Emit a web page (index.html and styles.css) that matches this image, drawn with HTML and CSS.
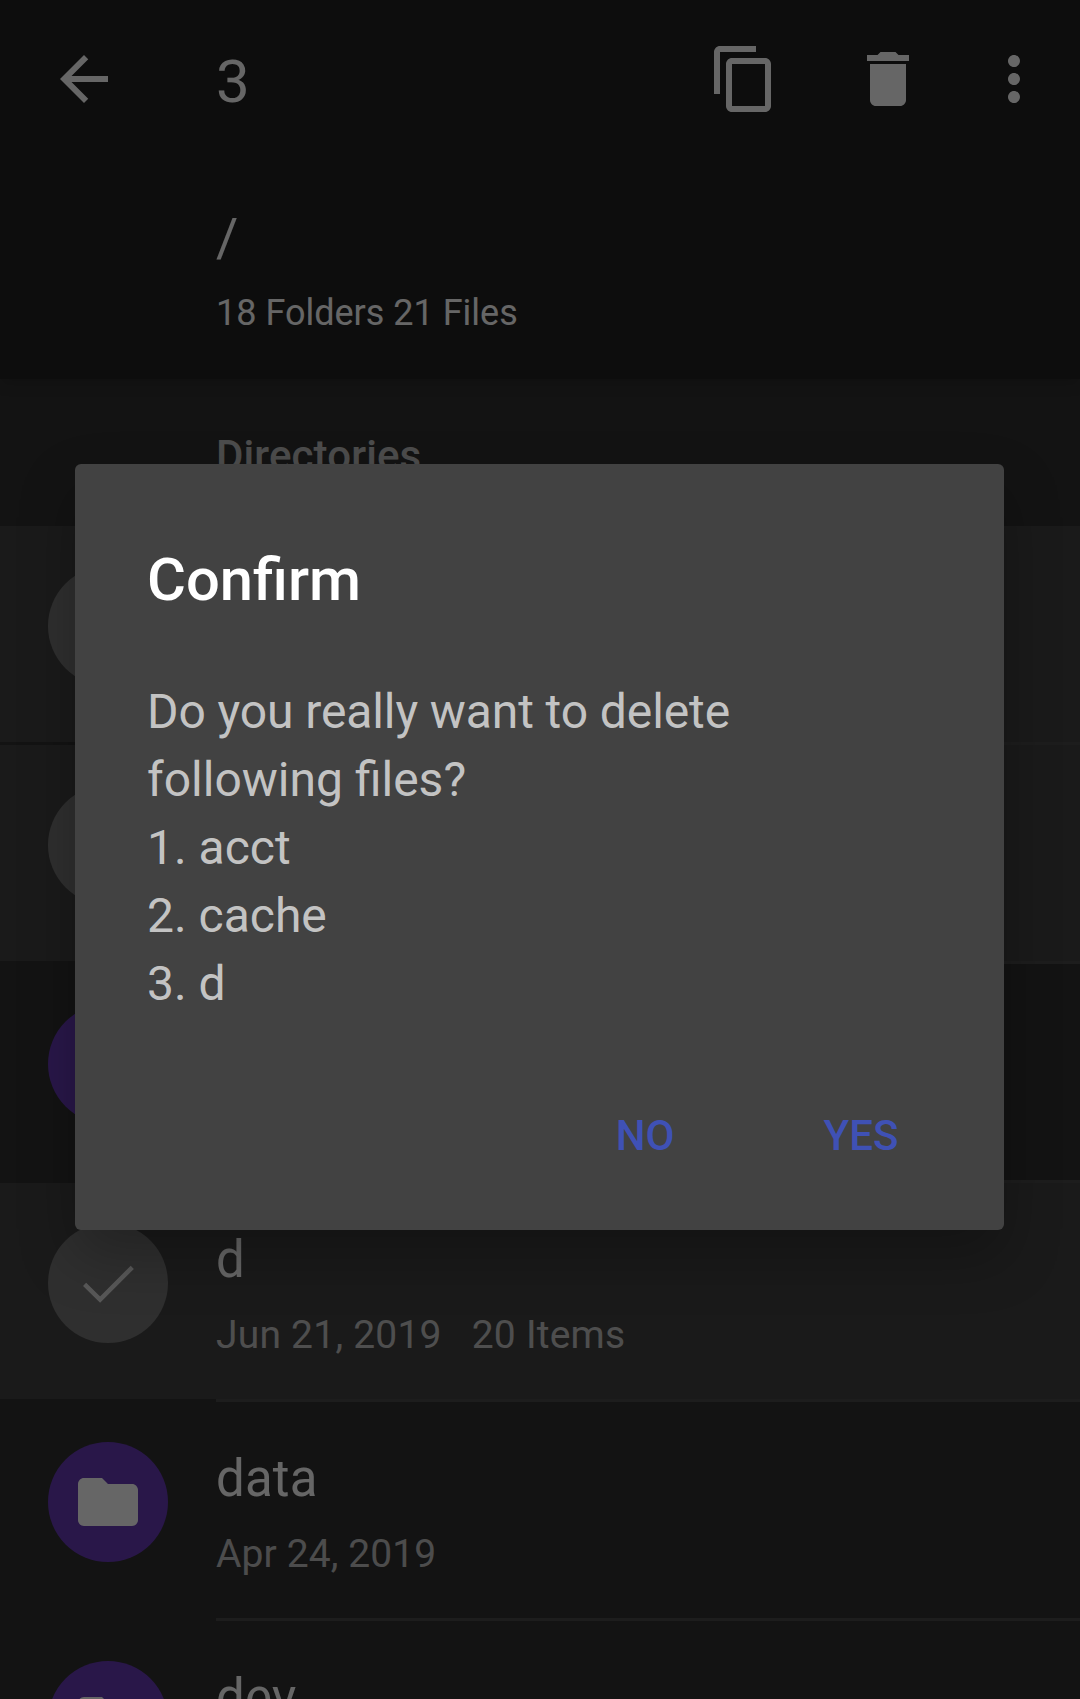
FILE: index.html
```html
<!DOCTYPE html>
<html lang="en">
<head>
<meta charset="utf-8">
<title>Files</title>
<link rel="stylesheet" href="styles.css">
</head>
<body>
<div class="screen">
  <header class="app-bar">
    <div class="toolbar">
      <svg class="icon" viewBox="0 0 24 24"><path d="M20 11H7.83l5.59-5.59L12 4l-8 8 8 8 1.41-1.41L7.83 13H20v-2z"/></svg>
      <span class="count">3</span>
      <svg class="icon" viewBox="0 0 24 24"><path d="M16 1H4c-1.1 0-2 .9-2 2v14h2V3h12V1zm3 4H8c-1.1 0-2 .9-2 2v14c0 1.1.9 2 2 2h11c1.1 0 2-.9 2-2V7c0-1.1-.9-2-2-2zm0 16H8V7h11v14z"/></svg>
      <svg class="icon delete" viewBox="0 0 24 24"><path d="M6 19c0 1.1.9 2 2 2h8c1.1 0 2-.9 2-2V7H6v12zM19 4h-3.5l-1-1h-5l-1 1H5v2h14V4z"/></svg>
      <svg class="icon more" viewBox="0 0 24 24"><path d="M12 8c1.1 0 2-.9 2-2s-.9-2-2-2-2 .9-2 2 .9 2 2 2zm0 2c-1.1 0-2 .9-2 2s.9 2 2 2 2-.9 2-2-.9-2-2-2zm0 6c-1.1 0-2 .9-2 2s.9 2 2 2 2-.9 2-2-.9-2-2-2z"/></svg>
    </div>
    <div class="path">/</div>
    <div class="summary">18 Folders 21 Files</div>
  </header>

  <main>
    <h2 class="section">Directories</h2>
    <div class="row selected"><div class="avatar"></div></div>
    <div class="row selected"><div class="avatar"></div></div>
    <div class="row"><div class="avatar"></div></div>
    <div class="row selected">
      <div class="avatar"><svg class="check" viewBox="0 0 120 120"><path d="M36.6 61.3l15.5 15.2L84.3 44.3"/></svg></div>
      <div class="text">
        <div class="name">d</div>
        <div class="meta"><span>Jun 21, 2019</span><span>20 Items</span></div>
      </div>
    </div>
    <div class="row">
      <div class="avatar"><svg class="icon" viewBox="0 0 24 24"><path d="M10 4H4c-1.1 0-1.99.9-1.99 2L2 18c0 1.1.9 2 2 2h16c1.1 0 2-.9 2-2V8c0-1.1-.9-2-2-2h-8l-2-2z"/></svg></div>
      <div class="text">
        <div class="name">data</div>
        <div class="meta"><span>Apr 24, 2019</span></div>
      </div>
    </div>
    <div class="row">
      <div class="avatar"><svg class="icon" viewBox="0 0 24 24"><path d="M10 4H4c-1.1 0-1.99.9-1.99 2L2 18c0 1.1.9 2 2 2h16c1.1 0 2-.9 2-2V8c0-1.1-.9-2-2-2h-8l-2-2z"/></svg></div>
      <div class="text"><div class="name">dev</div></div>
    </div>
  </main>

  <div class="scrim">
    <div class="dialog">
      <h1 class="title">Confirm</h1>
      <div class="message"><span class="question">Do you really want to delete</span><br>following files?<br>1. acct<br>2. cache<br>3. d</div>
      <div class="actions">
        <button class="action">NO</button>
        <button class="action">YES</button>
      </div>
    </div>
  </div>
</div>
</body>
</html>
```
FILE: styles.css
```css
* { box-sizing: border-box; }

body {
  margin: 0;
  background: #303030;
  color: #fff;
  font-family: Roboto, "Liberation Sans", sans-serif;
}

.screen {
  position: relative;
  width: 1080px;
  height: 1699px;
  overflow: hidden;
}

.icon {
  display: block;
  flex: none;
  width: 72px;
  height: 72px;
  fill: currentColor;
}

.app-bar {
  position: relative;
  height: 379px;
  background: #212121;
  box-shadow: 0 6px 12px rgba(0, 0, 0, .14);
}

.toolbar {
  display: flex;
  align-items: center;
  height: 158px;
  padding: 0 30px 0 48px;
}

.count {
  flex: 1;
  padding: 6px 0 0 96px;
  font-size: 60px;
  line-height: 72px;
}

.delete { margin-left: 72px; }
.more { margin-left: 54px; }

.path {
  padding: 48px 0 0 216px;
  font-size: 54px;
  line-height: 64px;
}

.summary {
  padding: 19px 0 0 216px;
  font-size: 36px;
  line-height: 48px;
}

.section {
  height: 147px;
  margin: 0;
  padding: 53px 0 0 216px;
  color: rgba(255, 255, 255, .7);
  font-size: 42px;
  font-weight: 500;
  letter-spacing: .12px;
  line-height: 48px;
}

.row {
  display: flex;
  height: 219px;
  padding: 40px 0 0 48px;
  background: linear-gradient(to right, #303030 216px, #494949 216px) bottom / 100% 3px no-repeat;
}

.selected {
  background:
    linear-gradient(to right, #303030 216px, #494949 216px) bottom / 100% 3px no-repeat,
    #424242;
}

.avatar {
  display: flex;
  flex: none;
  align-items: center;
  justify-content: center;
  width: 120px;
  height: 120px;
  border-radius: 50%;
  background: #673ab7;
}

.selected .avatar { background: #757575; }

.check {
  width: 120px;
  height: 120px;
  fill: none;
  stroke: #dcdcdc;
  stroke-width: 4.5;
}

.text {
  padding-left: 48px;
}

.name {
  margin-top: 5px;
  font-size: 51px;
  letter-spacing: .15px;
  line-height: 64px;
}

.meta {
  display: flex;
  gap: 30px;
  margin-top: 19px;
  color: rgba(255, 255, 255, .7);
  font-size: 39px;
  letter-spacing: .1px;
  line-height: 48px;
}

.selected .meta { letter-spacing: .22px; }

.scrim {
  position: absolute;
  inset: 0;
  padding: 464px 76px 0 75px;
  background: rgba(0, 0, 0, .6);
}

.dialog {
  height: 766px;
  padding: 80px 47px 0 72px;
  border-radius: 6px;
  background: #424242;
  box-shadow: 0 26px 56px rgba(0, 0, 0, .26);
}

.title {
  margin: 0;
  font-size: 59.7px;
  font-weight: 500;
  line-height: 72px;
}

.message {
  margin-top: 62px;
  color: rgba(255, 255, 255, .7);
  font-size: 48px;
  line-height: 68px;
}

.question { letter-spacing: -.1px; }

.actions {
  display: flex;
  justify-content: flex-end;
  gap: 24px;
  margin-top: 46px;
}

.action {
  width: 192px;
  height: 144px;
  padding: 0;
  border: 0;
  background: none;
  color: #3f51b5;
  font: 500 42px/48px Roboto, "Liberation Sans", sans-serif;
}
```
